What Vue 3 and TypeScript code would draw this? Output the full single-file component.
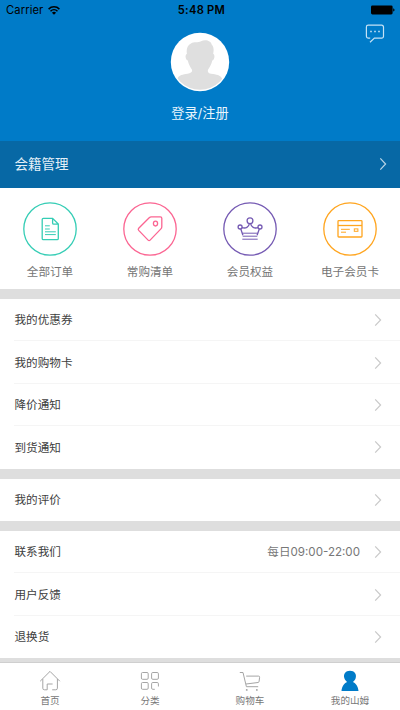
<script setup lang="ts">
interface Row {
  label: string
  note?: string
}

const shortcuts = [
  { id: 'orders', label: '全部订单' },
  { id: 'list', label: '常购清单' },
  { id: 'rights', label: '会员权益' },
  { id: 'card', label: '电子会员卡' },
]

const groups: Row[][] = [
  [{ label: '我的优惠券' }, { label: '我的购物卡' }, { label: '降价通知' }, { label: '到货通知' }],
  [{ label: '我的评价' }],
  [{ label: '联系我们', note: '每日09:00-22:00' }, { label: '用户反馈' }, { label: '退换货' }],
]

const tabs = [
  { id: 'home', label: '首页' },
  { id: 'category', label: '分类' },
  { id: 'cart', label: '购物车' },
  { id: 'mine', label: '我的山姆' },
]
</script>

<template>
  <div class="screen">
    <header class="profile">
      <div class="status">
        <div class="carrier">
          <span>Carrier</span>
          <svg class="wifi" width="12" height="9" viewBox="0 0 12 9">
            <path d="M.6 3.1a7.6 7.6 0 0 1 10.8 0M2.5 5.2a5 5 0 0 1 7 0" fill="none" stroke="#000" stroke-width="1.5" />
            <path d="M6 8.8 3.9 6.7a3 3 0 0 1 4.2 0z" />
          </svg>
        </div>
        <span class="time">5:48 PM</span>
        <svg class="battery" width="24" height="10" viewBox="0 0 24 10">
          <rect x="0" y=".4" width="21.6" height="9" rx="1.4" />
          <path d="M22.2 3.2c1.8.5 1.8 2.9 0 3.4z" />
        </svg>
      </div>
      <svg class="chat" width="20" height="20" viewBox="0 0 20 20">
        <path d="M5.2 14.1H3.2A1.8 1.8 0 0 1 1.4 12.3V3A1.8 1.8 0 0 1 3.2 1.2H16.7A1.8 1.8 0 0 1 18.5 3V12.3A1.8 1.8 0 0 1 16.7 14.1H9.4L5 18.2" />
        <path class="dots" d="M5.2 7.5h1.6M9.2 7.5h1.6M13.2 7.5h1.6" />
      </svg>
      <svg class="avatar" width="60" height="60" viewBox="0 0 60 60">
        <defs><clipPath id="face"><circle cx="30" cy="30" r="27.8" /></clipPath></defs>
        <circle cx="30" cy="30" r="29.2" fill="#fff" />
        <path clip-path="url(#face)" fill="#dfdfdf" d="M21 11.5C24 9.2 28 11 31 9.2c4-2.2 10-.9 10.8 3.5 2 2 2.200 5 1.400 9 2 1.100 1.500 5.900-.9 6.900-.7 4-3 7.100-4.300 9.100-.6 2.500.3 3.600 3.200 4.100 5 .9 9.300.8 11.300 5.700V60H7V47.500c2-5 6-4.800 10.500-5.700 3.500-.7 5-1.600 4.500-4.100-1.300-2-3.500-5.100-4.200-9.100-2.600-1-3-5.800-.9-6.900-.8-4.500.6-8.500 4.100-10.200z" />
      </svg>
      <div class="login">登录/注册</div>
    </header>

    <div class="membership">
      <span class="membership-title">会籍管理</span>
      <svg class="arrow" width="8" height="14" viewBox="0 0 8 14"><path d="m1.3 1.4 5.3 5.6-5.3 5.6" /></svg>
    </div>

    <nav class="shortcuts">
      <div v-for="item in shortcuts" :key="item.id" class="shortcut">
        <div class="ring" :class="item.id">
          <svg width="54" height="54" viewBox="0 0 54 54">
            <circle cx="27" cy="27" r="26.2" />
            <g v-if="item.id === 'orders'">
              <path d="M20.4 16.3H29.6L35.3 22V36.5a1.2 1.2 0 0 1-1.2 1.2H20.4a1.2 1.2 0 0 1-1.2-1.2v-19a1.2 1.2 0 0 1 1.2-1.2zM29.6 16.5v4.4a1.2 1.2 0 0 0 1.2 1.2h4.3" />
              <path class="thin" d="M22 23.8h4.8M22 27h4.8M22 29.8h10.8M22 32.6h10.8" />
            </g>
            <g v-else-if="item.id === 'list'">
              <path d="M15.7 26.2 26.2 15.7q.9-.9 2.1-.9h9q1.5 0 1.5 1.5v8.5q0 1.2-.9 2.1l-10.8 11.2q-1 1-2 0l-9.4-9.7q-1-1.1 0-2.2z" />
              <ellipse cx="32.5" cy="21.6" rx="2.1" ry="2.4" />
            </g>
            <g v-else-if="item.id === 'rights'">
              <circle cx="27" cy="18.8" r="2.9" />
              <circle cx="17.1" cy="25" r="2" />
              <circle cx="37" cy="25" r="2" />
              <path d="m17.8 27 2.1 6.3M36.3 27l-2.2 6.3M18.9 25.6c4 1.2 6.8-.6 7.500-4M35.200 25.600c-4 1.200-6.900-.6-7.600-4" />
              <path class="thin" d="M19.200 31.200h15.600M19.700 34.200h14.600M19.300 37.200h15.400" />
            </g>
            <g v-else>
              <rect x="15" y="18.6" width="24" height="16.4" rx=".8" />
              <path d="M15 23.5h24" />
              <path class="thin" d="M18 27.3h8.8M18 30.2h5" />
              <rect class="thin" x="31.3" y="26.9" width="3.600" height="2.400" />
            </g>
          </svg>
        </div>
        <span class="caption">{{ item.label }}</span>
      </div>
    </nav>

    <main class="groups">
      <section v-for="(group, index) in groups" :key="index" class="group">
        <div v-for="row in group" :key="row.label" class="row">
          <span class="row-label">{{ row.label }}</span>
          <span v-if="row.note" class="note">{{ row.note }}</span>
          <svg class="arrow" width="8" height="14" viewBox="0 0 8 14"><path d="m1.2 1.3 5.4 5.7-5.4 5.7" /></svg>
        </div>
      </section>
    </main>

    <footer class="tabs">
      <div v-for="tab in tabs" :key="tab.id" class="tab">
        <svg class="tab-icon" :class="tab.id" width="22" height="22" viewBox="0 0 22 22">
          <path v-if="tab.id === 'home'" d="M1.2 11.2 11 1.4l9.8 9.8M3.8 9V18.2q0 1.6 1.6 1.6H8.2V14h5.4M18.4 9V18.2q0 1.6-1.6 1.6H13.2" />
          <g v-else-if="tab.id === 'category'">
            <rect x="2.4" y="2.5" width="6.8" height="6.8" rx="1.2" />
            <rect x="12.6" y="2.5" width="6.8" height="6.8" rx="1.2" />
            <rect x="2.4" y="12.5" width="6.8" height="6.8" rx="1.2" />
            <path d="M15.8 19.3h-2q-1.2 0-1.2-1.2v-4.4q0-1.2 1.2-1.2h4.4q1.2 0 1.2 1.2v2.8" />
          </g>
          <g v-else-if="tab.id === 'cart'">
            <path d="M.8 2.5H4L7.4 16.7H19.2M7.2 6.1H19.5q1.2 0 1.1 1.2l-.5 4.1q-.1 1-1.1 1.1L7 14" />
            <path class="wheels" d="M7.7 19.9h.1M17.8 19.9h.1" />
          </g>
          <path v-else d="M11 .7c4.5 0 6.8 3.4 5.7 7.3-.4 1.6-1.6 3.2-2.9 4.1 3.2 1.2 5.2 4.7 5.7 8.8h-17c.5-4.1 2.5-7.6 5.7-8.8C7 11.2 5.8 9.6 5.3 8 4.2 4.1 6.5.7 11 .7z" />
        </svg>
        <span class="tab-label">{{ tab.label }}</span>
      </div>
    </footer>
  </div>
</template>

<style>
body {
  overflow: hidden;
}
</style>

<style scoped>
.screen {
  display: flex;
  flex-direction: column;
  width: 400px;
  height: 710px;
  background: #fff;
  font-family: Inter, "Noto Sans CJK SC", sans-serif;
  font-size: 11.6px;
  color: #404040;
}
svg {
  display: block;
  flex: none;
}
.profile {
  position: relative;
  display: flex;
  flex-direction: column;
  align-items: center;
  height: 140.5px;
  flex: none;
  background: #007bc8;
}
.status {
  display: grid;
  grid-template-columns: 1fr auto 1fr;
  align-items: center;
  width: 100%;
  height: 20px;
  box-sizing: border-box;
  padding: 0 5px 0 6px;
  color: #000;
  font-size: 11.2px;
}
.carrier {
  display: flex;
  align-items: center;
  gap: 5px;
  letter-spacing: 0.1px;
}
.time {
  padding-left: 2px;
  font-weight: 600;
  letter-spacing: 0.25px;
}
.battery {
  justify-self: end;
}
.chat {
  position: absolute;
  top: 24px;
  right: 15px;
  fill: none;
  stroke: #c5e2f5;
  stroke-width: 1.2;
}
.chat .dots {
  stroke-width: 1.5;
}
.avatar {
  margin-top: 11.5px;
}
.login {
  margin-top: 11.5px;
  font-size: 13.2px;
  line-height: 20px;
  color: #e8f5fd;
}
.membership {
  display: flex;
  align-items: center;
  justify-content: space-between;
  height: 47.2px;
  flex: none;
  box-sizing: border-box;
  padding: 0 13.5px 0 14.5px;
  background: #0768a5;
  color: #e4f0f8;
  font-size: 13.5px;
}
.membership-title {
  padding-bottom: 2px;
}
.arrow {
  fill: none;
  stroke: #c9c9c9;
  stroke-width: 1.2;
}
.membership .arrow {
  stroke: #b9d5e7;
}
.shortcuts {
  display: grid;
  grid-template-columns: repeat(4, 1fr);
  height: 101.3px;
  flex: none;
  box-sizing: border-box;
  padding-top: 14.3px;
}
.shortcut {
  display: flex;
  flex-direction: column;
  align-items: center;
}
.caption {
  margin-top: 6px;
  line-height: 20px;
  color: #757575;
}
.ring svg {
  fill: none;
  stroke: currentColor;
  stroke-width: 1.3;
}
.ring .thin {
  stroke-width: 1;
}
.orders {
  color: #35cdb5;
}
.list {
  color: #fb6592;
}
.rights {
  color: #755ab3;
}
.card {
  color: #ffa51f;
}
.groups {
  flex: none;
  height: 373px;
  background: #dedede;
}
.group {
  padding-top: 10px;
}
.row {
  display: flex;
  align-items: center;
  height: 42.4px;
  box-sizing: border-box;
  padding: 0 18px 0 14.5px;
  background: linear-gradient(#f5f5f5, #f5f5f5) 14px 100% / 100% 1px no-repeat #fff;
}
.row:last-child {
  background: #fff;
}
.row .arrow {
  margin-left: auto;
}
.row-label,
.note {
  padding-bottom: 1.5px;
}
.note {
  margin-left: auto;
  color: #777;
}
.row .note + .arrow {
  margin-left: 14px;
}
.tabs {
  display: grid;
  grid-template-columns: repeat(4, 1fr);
  flex: 1;
  border-top: 1px solid #cfcfcf;
  background: #fff;
}
.tab {
  display: flex;
  flex-direction: column;
  align-items: center;
  padding-top: 7px;
}
.tab-icon {
  fill: none;
  stroke: #a5a5a5;
  stroke-width: 1;
}
.tab-icon.mine {
  fill: #007bc8;
  stroke: none;
}
.wheels {
  stroke-width: 1.8;
  stroke-linecap: round;
}
.tab-label {
  margin-top: 1px;
  font-size: 9.6px;
  line-height: 16px;
  color: #777;
}
</style>
